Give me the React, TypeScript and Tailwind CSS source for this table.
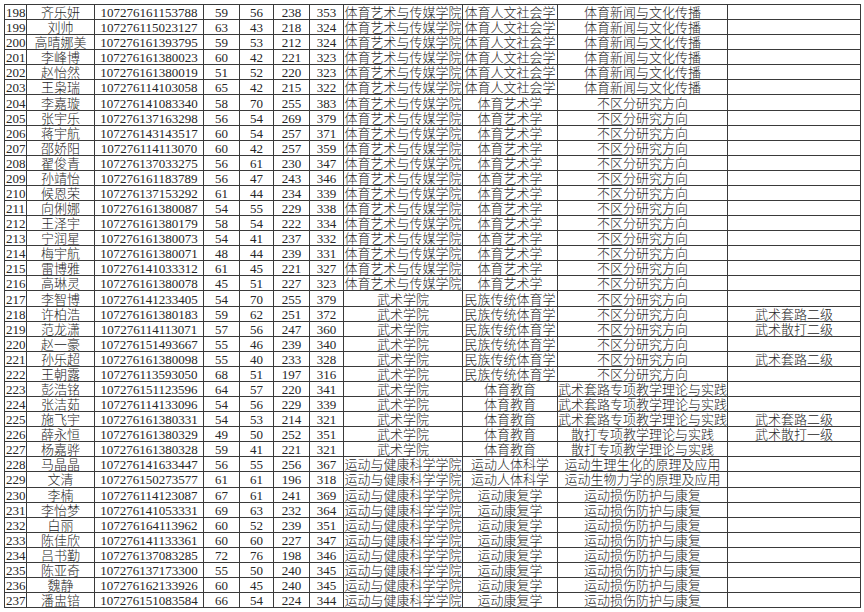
const rows: string[][] = [
  ["198", "齐乐妍", "107276161153788", "59", "56", "238", "353", "体育艺术与传媒学院", "体育人文社会学", "体育新闻与文化传播", ""],
  ["199", "刘帅", "107276115023127", "63", "43", "218", "324", "体育艺术与传媒学院", "体育人文社会学", "体育新闻与文化传播", ""],
  ["200", "高晴娜美", "107276161393795", "59", "53", "212", "324", "体育艺术与传媒学院", "体育人文社会学", "体育新闻与文化传播", ""],
  ["201", "李峰博", "107276161380023", "60", "42", "221", "323", "体育艺术与传媒学院", "体育人文社会学", "体育新闻与文化传播", ""],
  ["202", "赵怡然", "107276161380019", "51", "52", "220", "323", "体育艺术与传媒学院", "体育人文社会学", "体育新闻与文化传播", ""],
  ["203", "王枭瑞", "107276114103058", "65", "42", "215", "322", "体育艺术与传媒学院", "体育人文社会学", "体育新闻与文化传播", ""],
  ["204", "李嘉璇", "107276141083340", "58", "70", "255", "383", "体育艺术与传媒学院", "体育艺术学", "不区分研究方向", ""],
  ["205", "张宇乐", "107276137163298", "56", "54", "269", "379", "体育艺术与传媒学院", "体育艺术学", "不区分研究方向", ""],
  ["206", "蒋宇航", "107276143143517", "60", "54", "257", "371", "体育艺术与传媒学院", "体育艺术学", "不区分研究方向", ""],
  ["207", "邵娇阳", "107276114113070", "60", "42", "257", "359", "体育艺术与传媒学院", "体育艺术学", "不区分研究方向", ""],
  ["208", "翟俊青", "107276137033275", "56", "61", "230", "347", "体育艺术与传媒学院", "体育艺术学", "不区分研究方向", ""],
  ["209", "孙靖怡", "107276161183789", "56", "47", "243", "346", "体育艺术与传媒学院", "体育艺术学", "不区分研究方向", ""],
  ["210", "候恩荣", "107276137153292", "61", "44", "234", "339", "体育艺术与传媒学院", "体育艺术学", "不区分研究方向", ""],
  ["211", "向俐娜", "107276161380087", "54", "55", "229", "338", "体育艺术与传媒学院", "体育艺术学", "不区分研究方向", ""],
  ["212", "王泽宇", "107276161380179", "58", "54", "222", "334", "体育艺术与传媒学院", "体育艺术学", "不区分研究方向", ""],
  ["213", "宁润星", "107276161380073", "54", "41", "237", "332", "体育艺术与传媒学院", "体育艺术学", "不区分研究方向", ""],
  ["214", "梅宇航", "107276161380071", "48", "44", "239", "331", "体育艺术与传媒学院", "体育艺术学", "不区分研究方向", ""],
  ["215", "雷博雅", "107276141033312", "61", "45", "221", "327", "体育艺术与传媒学院", "体育艺术学", "不区分研究方向", ""],
  ["216", "高琳灵", "107276161380078", "45", "51", "227", "323", "体育艺术与传媒学院", "体育艺术学", "不区分研究方向", ""],
  ["217", "李智博", "107276141233405", "54", "70", "255", "379", "武术学院", "民族传统体育学", "不区分研究方向", ""],
  ["218", "许柏浩", "107276161380183", "59", "62", "251", "372", "武术学院", "民族传统体育学", "不区分研究方向", "武术套路二级"],
  ["219", "范龙潇", "107276114113071", "57", "56", "247", "360", "武术学院", "民族传统体育学", "不区分研究方向", "武术散打二级"],
  ["220", "赵一豪", "107276151493667", "55", "46", "239", "340", "武术学院", "民族传统体育学", "不区分研究方向", ""],
  ["221", "孙乐超", "107276161380098", "55", "40", "233", "328", "武术学院", "民族传统体育学", "不区分研究方向", "武术套路二级"],
  ["222", "王朝露", "107276113593050", "68", "51", "197", "316", "武术学院", "民族传统体育学", "不区分研究方向", ""],
  ["223", "彭浩铭", "107276151123596", "64", "57", "220", "341", "武术学院", "体育教育", "武术套路专项教学理论与实践", ""],
  ["224", "张洁茹", "107276114133096", "54", "56", "229", "339", "武术学院", "体育教育", "武术套路专项教学理论与实践", ""],
  ["225", "施飞宇", "107276161380331", "54", "53", "214", "321", "武术学院", "体育教育", "武术套路专项教学理论与实践", "武术套路二级"],
  ["226", "薛永恒", "107276161380329", "49", "50", "252", "351", "武术学院", "体育教育", "散打专项教学理论与实践", "武术散打一级"],
  ["227", "杨嘉骅", "107276161380328", "59", "41", "221", "321", "武术学院", "体育教育", "散打专项教学理论与实践", ""],
  ["228", "马晶晶", "107276141633447", "56", "55", "256", "367", "运动与健康科学学院", "运动人体科学", "运动生理生化的原理及应用", ""],
  ["229", "文清", "107276150273577", "61", "61", "196", "318", "运动与健康科学学院", "运动人体科学", "运动生物力学的原理及应用", ""],
  ["230", "李楠", "107276114123087", "67", "61", "241", "369", "运动与健康科学学院", "运动康复学", "运动损伤防护与康复", ""],
  ["231", "李怡梦", "107276141053331", "69", "63", "232", "364", "运动与健康科学学院", "运动康复学", "运动损伤防护与康复", ""],
  ["232", "白丽", "107276164113962", "60", "52", "239", "351", "运动与健康科学学院", "运动康复学", "运动损伤防护与康复", ""],
  ["233", "陈佳欣", "107276141133361", "60", "60", "227", "347", "运动与健康科学学院", "运动康复学", "运动损伤防护与康复", ""],
  ["234", "吕书勤", "107276137083285", "72", "76", "198", "346", "运动与健康科学学院", "运动康复学", "运动损伤防护与康复", ""],
  ["235", "陈亚奇", "107276137173300", "55", "50", "240", "345", "运动与健康科学学院", "运动康复学", "运动损伤防护与康复", ""],
  ["236", "魏静", "107276162133926", "60", "45", "240", "345", "运动与健康科学学院", "运动康复学", "运动损伤防护与康复", ""],
  ["237", "潘盅锫", "107276151083584", "66", "54", "224", "344", "运动与健康科学学院", "运动康复学", "运动损伤防护与康复", ""],
]

const widths = [22, 68, 109, 36, 34, 36, 34, 119, 95, 169, 133]

export default function App() {
  return (
    <div className="bg-white w-[864px] h-[612px] overflow-hidden pl-[4px] pt-[4px]">
      <table className="table-fixed border-collapse text-[13px] leading-none font-light text-[#262626] font-['Liberation_Serif','Noto_Sans_CJK_SC',serif]">
        <colgroup>
          {widths.map((w, i) => (
            <col key={i} style={{ width: w }} />
          ))}
        </colgroup>
        <tbody>
          {rows.map((r) => (
            <tr key={r[0]} className="h-[15.08px]">
              {r.map((c, i) => (
                <td
                  key={i}
                  className={
                    "border-[1.5px] border-[#3a3a3a] p-0 pt-[1px] whitespace-nowrap overflow-hidden " +
                    (i === 0 ? "text-left pl-[1px]" : "text-center")
                  }
                >
                  {c}
                </td>
              ))}
            </tr>
          ))}
        </tbody>
      </table>
    </div>
  )
}
